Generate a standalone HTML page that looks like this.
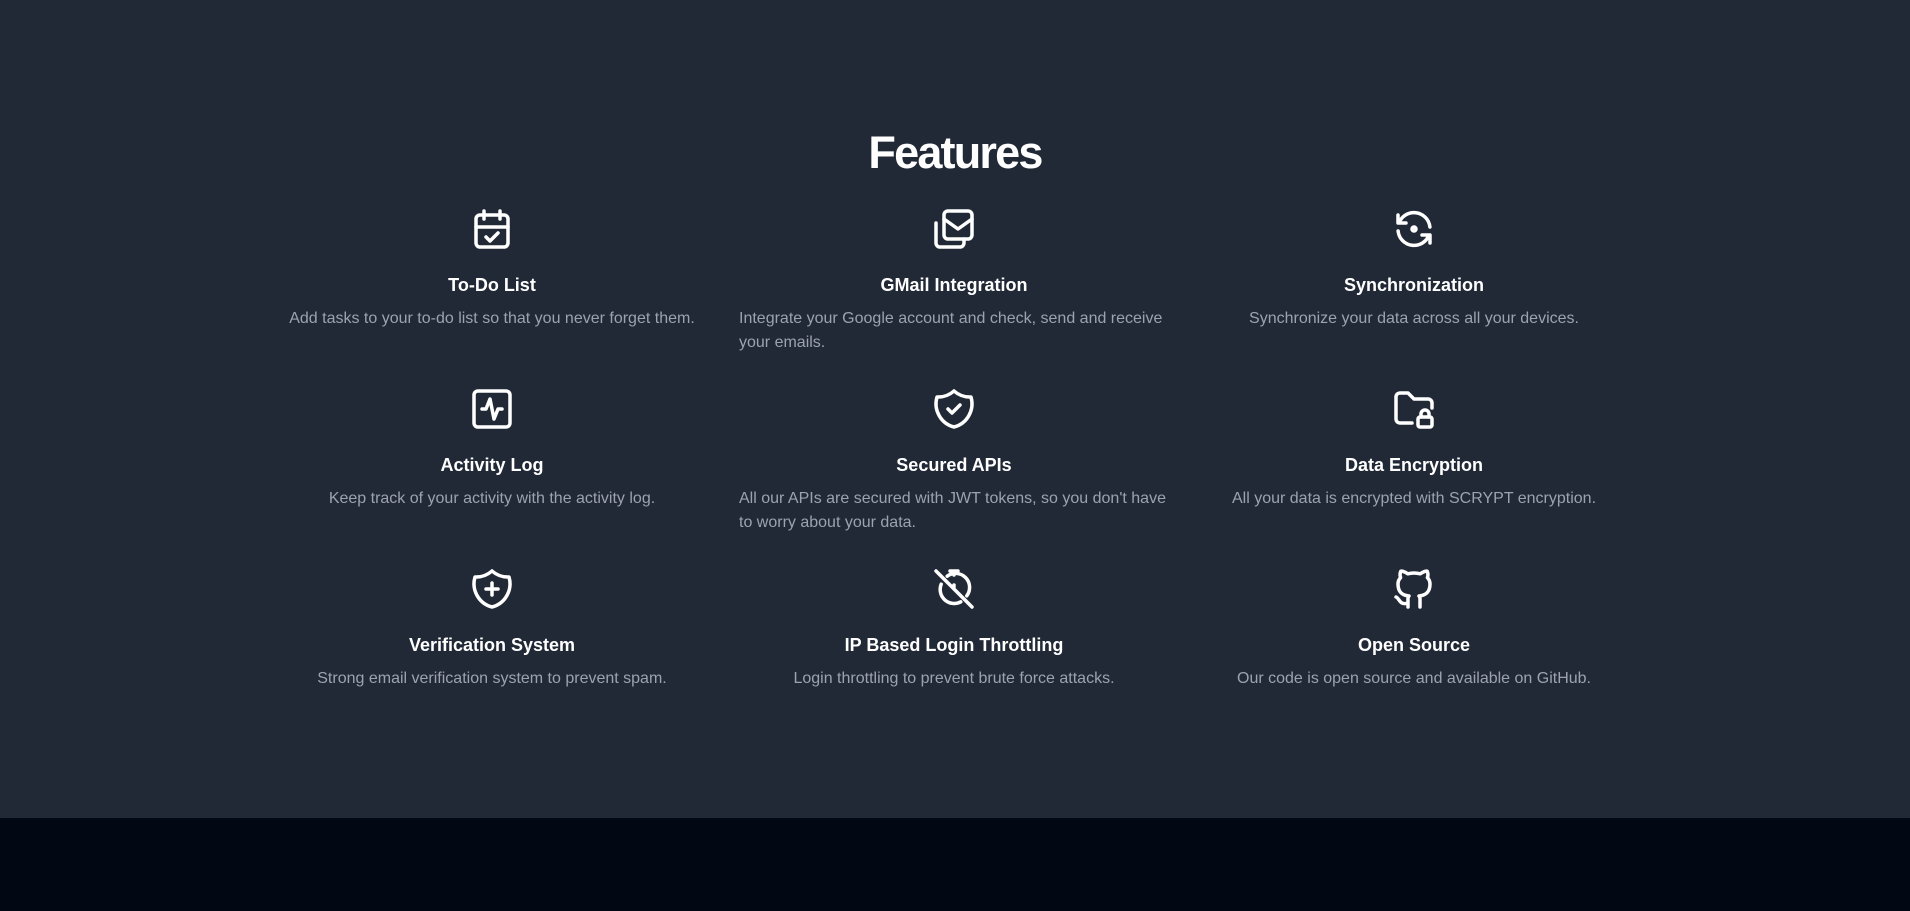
<!DOCTYPE html>
<html><head><meta charset="utf-8"><style>
*{margin:0;padding:0;box-sizing:border-box}
body{width:1910px;height:911px;background:#212936;font-family:"Liberation Sans",sans-serif;overflow:hidden;position:relative}
h1{position:absolute;top:127px;left:0;width:1910px;text-align:center;color:#fff;font-size:45px;font-weight:bold;letter-spacing:-1.8px}
.f{position:absolute;width:440px;text-align:center}
.f svg{display:block;margin:0 auto;width:48px;height:48px}
.f h3{color:#fff;font-size:18px;font-weight:bold;margin-top:20px;height:24px;line-height:24px}
.f p{color:#9ca3af;font-size:16px;line-height:24px;margin-top:10px}
.f p.l{text-align:left;padding-left:5px}
footer{position:absolute;left:0;top:818px;width:1910px;height:93px;background:#020714}
</style></head><body>
<h1>Features</h1>

<div class="f" style="left:272px;top:205px">
<svg viewBox="0 0 24 24" fill="none" stroke="#fff" stroke-width="1.75" stroke-linecap="round" stroke-linejoin="round"><rect x="4" y="5" width="16" height="16" rx="2"/><path d="M16 3v4M8 3v4M4 11h16M9 16l2 2 4-4"/></svg>
<h3>To-Do List</h3><p>Add tasks to your to-do list so that you never forget them.</p></div>

<div class="f" style="left:734px;top:205px">
<svg viewBox="0 0 24 24" fill="none" stroke="#fff" stroke-width="1.75" stroke-linecap="round" stroke-linejoin="round"><rect x="7" y="3" width="14" height="14" rx="2"/><path d="M7 7l7 5 7-5M17 17v2a2 2 0 0 1-2 2H5a2 2 0 0 1-2-2V9"/></svg>
<h3>GMail Integration</h3><p class="l">Integrate your Google account and check, send and receive your emails.</p></div>

<div class="f" style="left:1194px;top:205px">
<svg viewBox="0 0 24 24" fill="none" stroke="#fff" stroke-width="1.75" stroke-linecap="round" stroke-linejoin="round"><path d="M19.95 11A8 8 0 0 0 4.5 9M4 5v4h4M4.05 13A8 8 0 0 0 19.5 15M20 19v-4h-4"/><circle cx="12" cy="12" r="1"/></svg>
<h3>Synchronization</h3><p>Synchronize your data across all your devices.</p></div>

<div class="f" style="left:272px;top:385px">
<svg viewBox="0 0 24 24" fill="none" stroke="#fff" stroke-width="1.75" stroke-linecap="round" stroke-linejoin="round"><rect x="3" y="3" width="18" height="18" rx="2"/><path d="M7 12h2l2-5 2 10 2-5h2"/></svg>
<h3>Activity Log</h3><p>Keep track of your activity with the activity log.</p></div>

<div class="f" style="left:734px;top:385px">
<svg viewBox="0 0 24 24" fill="none" stroke="#fff" stroke-width="1.75" stroke-linecap="round" stroke-linejoin="round"><path d="M12 3a12 12 0 0 0 8.5 3A12 12 0 0 1 12 21 12 12 0 0 1 3.5 6 12 12 0 0 0 12 3"/><path d="M9 12l2 2 4-4"/></svg>
<h3>Secured APIs</h3><p class="l">All our APIs are secured with JWT tokens, so you don't have to worry about your data.</p></div>

<div class="f" style="left:1194px;top:385px">
<svg viewBox="0 0 24 24" fill="none" stroke="#fff" stroke-width="1.75" stroke-linecap="round" stroke-linejoin="round"><path d="M11 19H5a2 2 0 0 1-2-2V6a2 2 0 0 1 2-2h4l3 3h7a2 2 0 0 1 2 2v2.5"/><rect x="14" y="16" width="7" height="5" rx="1"/><path d="M15.5 16v-1.5a2 2 0 0 1 4 0V16"/></svg>
<h3>Data Encryption</h3><p>All your data is encrypted with SCRYPT encryption.</p></div>

<div class="f" style="left:272px;top:565px">
<svg viewBox="0 0 24 24" fill="none" stroke="#fff" stroke-width="1.75" stroke-linecap="round" stroke-linejoin="round"><path d="M12 3a12 12 0 0 0 8.5 3A12 12 0 0 1 12 21 12 12 0 0 1 3.5 6 12 12 0 0 0 12 3"/><path d="M9 12h6M12 9v6"/></svg>
<h3>Verification System</h3><p>Strong email verification system to prevent spam.</p></div>

<div class="f" style="left:734px;top:565px">
<svg viewBox="0 0 24 24" fill="none" stroke="#fff" stroke-width="1.75" stroke-linecap="round" stroke-linejoin="round"><path d="M5.6 9.6A7 7 0 0 0 15.4 18.4M18.4 15.4A7 7 0 0 0 8.6 5.6M12 3v2M10 3h4M12 10v1M3 3l18 18"/></svg>
<h3>IP Based Login Throttling</h3><p>Login throttling to prevent brute force attacks.</p></div>

<div class="f" style="left:1194px;top:565px">
<svg viewBox="0 0 24 24" fill="none" stroke="#fff" stroke-width="1.75" stroke-linecap="round" stroke-linejoin="round"><path d="M9 19c-4.3 1.4-4.3-2.5-6-3m12 5v-3.5c0-1 .1-1.4-.5-2 2.8-.3 5.5-1.4 5.5-6a4.6 4.6 0 0 0-1.3-3.2 4.2 4.2 0 0 0-.1-3.2s-1.1-.3-3.5 1.3a12.3 12.3 0 0 0-6.2 0C6.5 2.8 5.4 3.1 5.4 3.1a4.2 4.2 0 0 0-.1 3.2A4.6 4.6 0 0 0 4 9.5c0 4.6 2.7 5.7 5.5 6-.6.6-.6 1.2-.5 2V21"/></svg>
<h3>Open Source</h3><p>Our code is open source and available on GitHub.</p></div>

<footer></footer>
</body></html>
